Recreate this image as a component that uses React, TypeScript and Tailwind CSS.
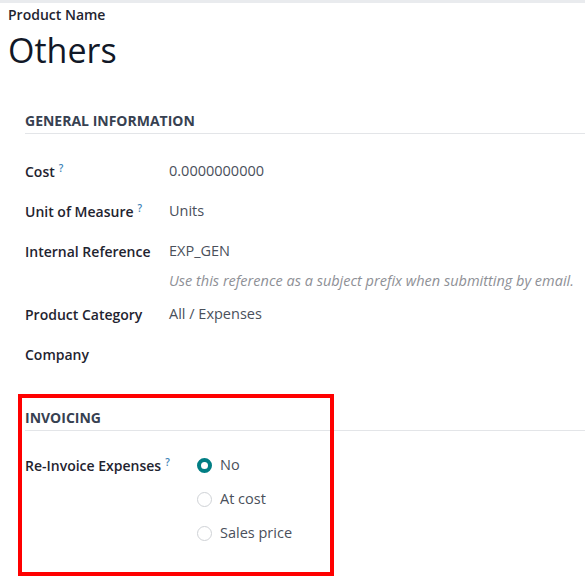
const font = { fontFamily: '"Open Sans", "Noto Sans", sans-serif' }

const Help = () => (
  <sup className="ml-1 text-[10px] font-semibold text-[#3b82b6]">?</sup>
)

const Row = ({ label, help, children }: { label: string; help?: boolean; children?: React.ReactNode }) => (
  <div className="grid h-[40px] grid-cols-[144px_1fr] items-center">
    <div className="text-[14px] font-semibold text-[#1f2430]">
      {label}
      {help && <Help />}
    </div>
    <div className="text-[14.5px] text-[#4a505b]">{children}</div>
  </div>
)

const Radio = ({ label, checked }: { label: string; checked?: boolean }) => (
  <div className="flex h-[34px] items-center gap-2">
    {checked ? (
      <span className="h-[15px] w-[15px] rounded-full border-[4px] border-[#017e84] bg-white" />
    ) : (
      <span className="h-[15px] w-[15px] rounded-full border border-[#cfd2d6] bg-white" />
    )}
    <span className="text-[14.5px] text-[#4a505b]">{label}</span>
  </div>
)

export default function App() {
  return (
    <div className="relative h-[583px] w-[585px] overflow-hidden bg-white" style={font}>
      <div className="h-[3px] bg-[#e9ebee]" />
      <div className="pl-2">
        <div className="mt-[2px] text-[14px] leading-[20px] font-semibold text-[#1f2430]">Product Name</div>
        <div className="mt-[5px] text-[34px] leading-[40px] text-[#111827]">Others</div>
      </div>

      <div className="mt-[40px] pl-[25px]">
        <div className="border-b border-[#e3e5e8] pb-[2px] text-[14px] font-bold text-[#374151]">
          GENERAL INFORMATION
        </div>
        <div className="mt-[17px]">
          <Row label="Cost" help>0.0000000000</Row>
          <Row label="Unit of Measure" help>Units</Row>
          <Row label="Internal Reference">EXP_GEN</Row>
          <div className="-mt-[4px] grid h-[27px] grid-cols-[144px_1fr] items-center">
            <div />
            <div className="whitespace-nowrap text-[14.5px] italic text-[#8e9096]">
              Use this reference as a subject prefix when submitting by email.
            </div>
          </div>
          <Row label="Product Category">All / Expenses</Row>
          <Row label="Company" />
        </div>

        <div className="mt-[33px] border-b border-[#e3e5e8] pb-[2px] text-[14px] font-bold text-[#374151]">
          INVOICING
        </div>
        <div className="mt-[17px] grid grid-cols-[172px_1fr]">
          <div className="flex h-[34px] items-center text-[14px] font-semibold text-[#1f2430]">
            <span>
              Re-Invoice Expenses
              <Help />
            </span>
          </div>
          <div>
            <Radio label="No" checked />
            <Radio label="At cost" />
            <Radio label="Sales price" />
          </div>
        </div>
      </div>

      <div className="absolute left-[18px] top-[394px] h-[182px] w-[316px] border-4 border-[#ff0000]" />
    </div>
  )
}
